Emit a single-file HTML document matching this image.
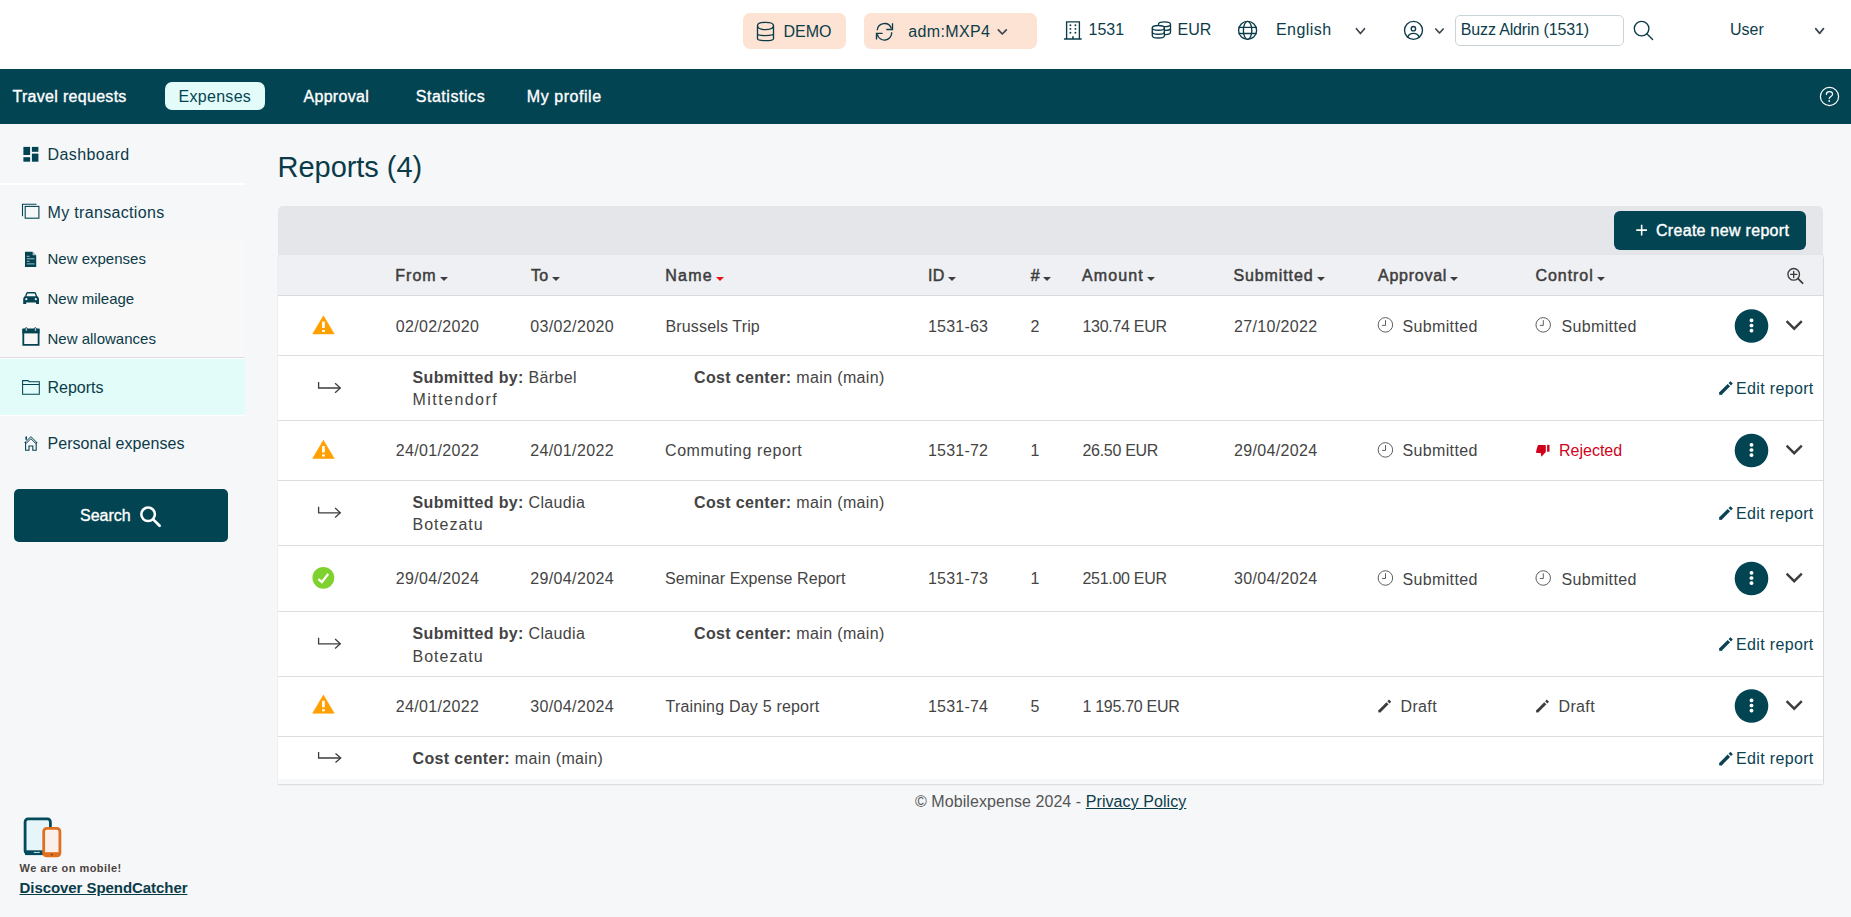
<!DOCTYPE html>
<html><head><meta charset="utf-8">
<style>
*{margin:0;padding:0;box-sizing:border-box}
html,body{width:1851px;height:917px;overflow:hidden}
body{position:relative;background:#f6f7f9;font-family:"Liberation Sans",sans-serif;color:#3d3d3d}
.a{position:absolute}
.t{position:absolute;white-space:nowrap;line-height:1;font-size:16px}
svg{position:absolute;overflow:visible}
#top{left:0;top:0;width:1851px;height:69px;background:#fff}
#nav{left:0;top:69px;width:1851px;height:55px;background:#034453}
.tb{color:#0c3c4a}
.nv{color:#fff;letter-spacing:.3px;-webkit-text-stroke:.35px #fff}
.sb{color:#0b3b48}
.hd{color:#3d3d3d;-webkit-text-stroke:.5px #3d3d3d}
.rw{color:#444;letter-spacing:.35px}
.bd{font-weight:bold}
.cr{display:inline-block;width:0;height:0;border-left:4px solid transparent;border-right:4px solid transparent;border-top:4.3px solid #3d3d3d;margin-left:4.5px;vertical-align:baseline}
.cr.r{border-top-color:#e8101a}
.ln{left:278px;width:1545px;height:1px;background:#dcdddf}
</style></head><body>
<div id="top" class="a"></div>
<!-- top bar pills -->
<div class="a" style="left:743px;top:13px;width:103px;height:36px;background:#fde3d3;border-radius:7px"></div>
<div class="a" style="left:864px;top:13px;width:173px;height:36px;background:#fde3d3;border-radius:7px"></div>
<div class="t tb" style="left:783.5px;top:23.5px">DEMO</div>
<div class="t tb" style="left:908.3px;top:23.5px;letter-spacing:.35px">adm:MXP4</div>
<div class="t tb" style="left:1088.5px;top:21.6px">1531</div>
<div class="t tb" style="left:1177.6px;top:21.5px">EUR</div>
<div class="t tb" style="left:1276px;top:22px;letter-spacing:.45px">English</div>
<div class="a" style="left:1455px;top:15px;width:169px;height:31px;border:1px solid #c9d4d8;border-radius:5px;background:#fff"></div>
<div class="t tb" style="left:1460.8px;top:22px;letter-spacing:-.15px">Buzz Aldrin (1531)</div>
<div class="t tb" style="left:1730px;top:21.5px">User</div>

<div id="nav" class="a"></div>
<div class="a" style="left:165px;top:82px;width:100px;height:28px;background:#e3fcf9;border-radius:7px"></div>
<div class="t nv" style="left:12.5px;top:88.7px">Travel requests</div>
<div class="t" style="left:178.5px;top:88.7px;color:#034453;letter-spacing:.3px">Expenses</div>
<div class="t nv" style="left:303.5px;top:88.7px">Approval</div>
<div class="t nv" style="left:415.7px;top:88.7px;letter-spacing:.55px">Statistics</div>
<div class="t nv" style="left:526.8px;top:88.7px;letter-spacing:.55px">My profile</div>

<!-- sidebar -->
<div class="a" style="left:0;top:183px;width:245px;height:2px;background:#fff"></div>
<div class="a" style="left:0;top:240px;width:245px;height:117px;background:#f8f8f8"></div>
<div class="a" style="left:0;top:357px;width:245px;height:1px;background:#dcdee0"></div>
<div class="a" style="left:0;top:358px;width:245px;height:58px;background:#fff"></div>
<div class="a" style="left:0;top:359px;width:245px;height:56px;background:#e2fdf9"></div>
<div class="t sb" style="left:47.6px;top:147.3px;letter-spacing:.4px">Dashboard</div>
<div class="t sb" style="left:47.5px;top:204.5px;letter-spacing:.33px">My transactions</div>
<div class="t sb" style="left:47.5px;top:251.2px;font-size:15px">New expenses</div>
<div class="t sb" style="left:47.5px;top:290.6px;font-size:15px">New mileage</div>
<div class="t sb" style="left:47.5px;top:330.8px;font-size:15px">New allowances</div>
<div class="t sb" style="left:47.5px;top:380px">Reports</div>
<div class="t sb" style="left:47.5px;top:435.9px;letter-spacing:.05px">Personal expenses</div>
<div class="a" style="left:14px;top:489px;width:214px;height:53px;background:#034453;border-radius:5px"></div>
<div class="t" style="left:80px;top:508px;color:#fff;font-size:16px;-webkit-text-stroke:.35px #fff">Search</div>

<div class="t" style="left:19.5px;top:862.6px;font-size:11px;font-weight:bold;color:#4a4440;letter-spacing:.45px">We are on mobile!</div>
<div class="t" style="left:19.5px;top:879.9px;font-size:15px;font-weight:bold;color:#0b3c49;text-decoration:underline;letter-spacing:-.06px">Discover SpendCatcher</div>

<!-- main -->
<div class="t" style="left:277.6px;top:152.6px;font-size:29px;color:#0b3b48;letter-spacing:-.05px">Reports (4)</div>

<div class="a" style="left:278px;top:206px;width:1545px;height:49px;background:#e5e6e9;border-radius:5px 5px 0 0"></div>
<div class="a" style="left:1614px;top:211px;width:192px;height:39px;background:#034453;border-radius:6px"></div>
<div class="t" style="left:1656px;top:222.5px;color:#fff;letter-spacing:.3px;-webkit-text-stroke:.4px #fff">Create new report</div>
<div class="a" style="left:278px;top:255px;width:1545px;height:529px;background:#f7f8fa;box-shadow:0 1px 1.5px rgba(0,0,0,.13),-.5px 0 1px rgba(0,0,0,.08),.5px 0 1px rgba(0,0,0,.08)"></div>
<div class="a" style="left:278px;top:255px;width:1545px;height:41px;background:#eff0f3"></div>
<div class="a" style="left:278px;top:296px;width:1545px;height:483px;background:#fff"></div>

<div class="a ln" style="top:295px;background:#d9dadd;height:1px"></div>
<div class="a ln" style="top:355px"></div>
<div class="a ln" style="top:420px"></div>
<div class="a ln" style="top:480px"></div>
<div class="a ln" style="top:545px"></div>
<div class="a ln" style="top:611px"></div>
<div class="a ln" style="top:676px"></div>
<div class="a ln" style="top:736px"></div>

<!-- header -->
<div class="t hd" style="left:395.3px;top:267.5px"><span style="letter-spacing:1.0px">From</span><i class="cr" style="margin-left:2.90px"></i></div>
<div class="t hd" style="left:531.0px;top:267.5px"><span style="letter-spacing:0.35px">To</span><i class="cr" style="margin-left:3.55px"></i></div>
<div class="t hd" style="left:665.2px;top:267.5px"><span style="letter-spacing:1.25px">Name</span><i class="cr r" style="margin-left:2.65px"></i></div>
<div class="t hd" style="left:928.0px;top:267.5px"><span style="letter-spacing:0.35px">ID</span><i class="cr" style="margin-left:3.55px"></i></div>
<div class="t hd" style="left:1030.7px;top:267.5px"><span style="letter-spacing:0.35px">#</span><i class="cr" style="margin-left:3.55px"></i></div>
<div class="t hd" style="left:1082.0px;top:267.5px"><span style="letter-spacing:1.13px">Amount</span><i class="cr" style="margin-left:2.77px"></i></div>
<div class="t hd" style="left:1233.4px;top:267.5px"><span style="letter-spacing:0.9px">Submitted</span><i class="cr" style="margin-left:3.00px"></i></div>
<div class="t hd" style="left:1378.0px;top:267.5px"><span style="letter-spacing:0.75px">Approval</span><i class="cr" style="margin-left:3.15px"></i></div>
<div class="t hd" style="left:1535.4px;top:267.5px"><span style="letter-spacing:0.97px">Control</span><i class="cr" style="margin-left:2.93px"></i></div>

<!-- rows -->
<div class="t rw" style="left:395.7px;top:318.5px">02/02/2020</div>
<div class="t rw" style="left:530.3px;top:318.5px">03/02/2020</div>
<div class="t rw" style="left:665.5px;top:318.5px;letter-spacing:.15px">Brussels Trip</div>
<div class="t rw" style="left:928px;top:318.5px;letter-spacing:.2px">1531-63</div>
<div class="t rw" style="left:1030.5px;top:318.5px">2</div>
<div class="t rw" style="left:1082.5px;top:318.5px;letter-spacing:-.3px">130.74 EUR</div>
<div class="t rw" style="left:1234px;top:318.5px">27/10/2022</div>
<div class="t rw" style="left:1402.5px;top:318.5px">Submitted</div>
<div class="t rw" style="left:1561.5px;top:318.5px">Submitted</div>

<div class="t rw" style="left:395.7px;top:442.7px">24/01/2022</div>
<div class="t rw" style="left:530.3px;top:442.7px">24/01/2022</div>
<div class="t rw" style="left:665px;top:442.7px;letter-spacing:.58px">Commuting report</div>
<div class="t rw" style="left:928px;top:442.7px;letter-spacing:.2px">1531-72</div>
<div class="t rw" style="left:1030.5px;top:442.7px">1</div>
<div class="t rw" style="left:1082.5px;top:442.7px;letter-spacing:-.3px">26.50 EUR</div>
<div class="t rw" style="left:1234px;top:442.7px">29/04/2024</div>
<div class="t rw" style="left:1402.5px;top:442.7px">Submitted</div>
<div class="t rw" style="left:1559px;top:442.7px;color:#d0021b;letter-spacing:0">Rejected</div>

<div class="t rw" style="left:395.7px;top:570.9px">29/04/2024</div>
<div class="t rw" style="left:530.3px;top:570.9px">29/04/2024</div>
<div class="t rw" style="left:665px;top:570.9px;letter-spacing:.08px">Seminar Expense Report</div>
<div class="t rw" style="left:928px;top:570.9px;letter-spacing:.2px">1531-73</div>
<div class="t rw" style="left:1030.5px;top:570.9px">1</div>
<div class="t rw" style="left:1082.5px;top:570.9px;letter-spacing:-.3px">251.00 EUR</div>
<div class="t rw" style="left:1234px;top:570.9px">30/04/2024</div>
<div class="t rw" style="left:1402.5px;top:571.5px">Submitted</div>
<div class="t rw" style="left:1561.5px;top:571.5px">Submitted</div>

<div class="t rw" style="left:395.7px;top:698.9px">24/01/2022</div>
<div class="t rw" style="left:530.3px;top:698.9px">30/04/2024</div>
<div class="t rw" style="left:665.5px;top:698.9px;letter-spacing:.2px">Training Day 5 report</div>
<div class="t rw" style="left:928px;top:698.9px;letter-spacing:.2px">1531-74</div>
<div class="t rw" style="left:1030.5px;top:698.9px">5</div>
<div class="t rw" style="left:1082.5px;top:698.9px;letter-spacing:-.3px">1 195.70 EUR</div>
<div class="t rw" style="left:1400.5px;top:699px">Draft</div>
<div class="t rw" style="left:1558.5px;top:699px">Draft</div>

<!-- sub rows -->
<div class="t rw" style="left:412.5px;top:369.5px"><b>Submitted by:</b> Bärbel</div>
<div class="t rw" style="left:412.5px;top:392px;letter-spacing:1.45px">Mittendorf</div>
<div class="t rw" style="left:694px;top:369.5px"><b>Cost center:</b> main (main)</div>
<div class="t rw" style="left:412.5px;top:494.5px"><b>Submitted by:</b> Claudia</div>
<div class="t rw" style="left:412.5px;top:517px;letter-spacing:1px">Botezatu</div>
<div class="t rw" style="left:694px;top:494.5px"><b>Cost center:</b> main (main)</div>
<div class="t rw" style="left:412.5px;top:625.9px"><b>Submitted by:</b> Claudia</div>
<div class="t rw" style="left:412.5px;top:648.6px;letter-spacing:1px">Botezatu</div>
<div class="t rw" style="left:694px;top:625.9px"><b>Cost center:</b> main (main)</div>
<div class="t rw" style="left:412.5px;top:751px"><b>Cost center:</b> main (main)</div>

<div class="t rw" style="left:1736px;top:380.6px;color:#0a4252">Edit report</div>
<div class="t rw" style="left:1736px;top:505.6px;color:#0a4252">Edit report</div>
<div class="t rw" style="left:1736px;top:636.6px;color:#0a4252">Edit report</div>
<div class="t rw" style="left:1736px;top:751px;color:#0a4252">Edit report</div>

<!-- footer -->
<div class="t" style="left:915px;top:794px;color:#555;letter-spacing:.07px">© Mobilexpense 2024 - <span style="color:#0b3c49;text-decoration:underline">Privacy Policy</span></div>


<svg class="a" style="left:0;top:0" width="1851" height="917" viewBox="0 0 1851 917" fill="none" stroke-linecap="round" stroke-linejoin="round">
<g stroke="#0c3c4a" stroke-width="1.35">
<!-- database -->
<path d="M757.5,25.5 C757.5,21.3 773.5,21.3 773.5,25.5 C773.5,31 757.5,31 757.5,25.5 M757.5,25.5 V38.8 C757.5,41.3 773.5,41.3 773.5,38.8 V25.5 M757.5,33.8 C757.5,36.2 773.5,36.2 773.5,33.8"/>
<!-- refresh -->
<path d="M877.2,30.2 A7.3,7.3 0 0 1 891.3,28.2 M892.5,23.2 V29.5 H886.3 M891.7,32.3 A7.3,7.3 0 0 1 877.3,34.4 M876.5,39.5 V33.4 H882.6" stroke-linecap="butt" stroke-linejoin="miter"/>
<!-- building -->
<path d="M1066.6,39 V21.8 H1079.4 V39 M1064.5,39 H1081.2" stroke-linejoin="miter"/>
<path d="M1073,39 V36.3" stroke-width="1.6" stroke-linecap="butt"/>
<!-- coins back -->
<path d="M1158.5,24.3 C1158.5,21 1170.5,21 1170.5,24.3 V32.3 C1170.5,34.8 1164,34.8 1164.4,34.3 M1164.4,26.6 C1168,26.8 1170.5,25.8 1170.5,24.3 M1164.4,30.4 C1168,30.6 1170.5,29.8 1170.5,28.3"/>
<path d="M1152.3,28 C1152.3,24.7 1164.4,24.7 1164.4,28 V35.7 C1164.4,38.7 1152.3,38.7 1152.3,35.7 Z" fill="#fff"/>
<path d="M1152.3,28 C1152.3,31 1164.4,31 1164.4,28 M1152.3,32 C1152.3,35 1164.4,35 1164.4,32"/>
<!-- globe -->
<circle cx="1247.6" cy="30.4" r="9"/>
<path d="M1239,27.4 H1256.2 M1239,33.5 H1256.2"/>
<ellipse cx="1247.6" cy="30.4" rx="4.2" ry="9"/>
<!-- user circle -->
<circle cx="1413.5" cy="30.35" r="9"/>
<circle cx="1413.4" cy="28.7" r="2.2"/>
<path d="M1407.6,37.2 C1408.6,34.8 1410.6,33.4 1413.4,33.4 C1416.2,33.4 1418.3,34.8 1419.3,37.2"/>
<!-- search -->
<circle cx="1641.6" cy="28.6" r="7.3"/>
<path d="M1647.1,34 L1652.6,39.5"/>
</g>
<g fill="#0c3c4a">
<circle cx="1070.4" cy="25.2" r="0.95"/><circle cx="1075.4" cy="25.2" r="0.95"/>
<circle cx="1070.4" cy="28.9" r="0.95"/><circle cx="1075.4" cy="28.9" r="0.95"/>
<circle cx="1070.4" cy="32.8" r="0.95"/><circle cx="1075.4" cy="32.8" r="0.95"/>
</g>
<g stroke="#3d4752" stroke-width="1.7">
<path d="M998.3,29.8 L1002.3,34 L1006.3,29.8"/>
<path d="M1356.4,28.7 L1360.45,33.5 L1364.5,28.7"/>
<path d="M1435.8,29 L1439.5,33 L1443.2,29"/>
<path d="M1815.7,28.6 L1819.6,33.4 L1823.5,28.6"/>
</g>
</svg>

<svg class="a" style="left:0;top:0" width="1851" height="917" viewBox="0 0 1851 917" fill="none">
<!-- help -->
<g stroke="#fff" stroke-width="1.2" stroke-linecap="round">
<circle cx="1829.5" cy="96.5" r="9.1"/>
<path d="M1826.4,94.4 C1826.4,92.6 1827.8,91.7 1829.5,91.7 C1831.3,91.7 1832.6,92.8 1832.6,94.3 C1832.6,96.2 1829.2,96.6 1829.2,98.6"/>
</g>
<rect x="1828.4" y="100.2" width="1.6" height="1.6" fill="#fff"/>
<!-- sidebar icons -->
<g fill="#034453">
<rect x="23.4" y="146.9" width="6.7" height="8.1"/>
<rect x="23.4" y="157.2" width="6.7" height="4.5"/>
<rect x="31.9" y="146.9" width="6.5" height="4.9"/>
<rect x="31.9" y="153.6" width="6.5" height="8.1"/>
</g>
<g stroke="#034453" stroke-width="1.1">
<path d="M22.5,216.2 V204.2 H36.5"/>
<rect x="25.2" y="206.4" width="13.7" height="11.8" fill="#f6f7f9"/>
</g>
<!-- doc -->
<path d="M25,251.7 H32.6 L36.2,255.3 V267 H25 Z" fill="#034453"/>
<path d="M32.6,251.7 V255.3 H36.2 Z" fill="#f6f7f9" opacity=".7"/>
<g stroke="#b9c9cd" stroke-width="0.9"><path d="M26.8,256.3 H29.5 M26.8,258.8 H34.5 M26.8,261.3 H29.5 M26.8,263.9 H34.5"/></g>
<!-- car -->
<path d="M23.2,299.5 C23.2,297.5 24.2,296.5 25,296.3 L26.3,292.8 C26.5,292.2 27,292 27.6,292 H34.6 C35.2,292 35.7,292.2 35.9,292.8 L37.2,296.3 C38,296.5 39,297.5 39,299.5 V303.9 H36 V302.5 H26.2 V303.9 H23.2 Z" fill="#034453"/>
<path d="M26.4,296.2 L27.5,293.4 H34.7 L35.8,296.2 Z" fill="#f6f7f9"/>
<circle cx="26.3" cy="299.2" r="1.1" fill="#f6f7f9"/><circle cx="35.8" cy="299.2" r="1.1" fill="#f6f7f9"/>
<!-- calendar -->
<path d="M23.3,329.4 H38.6 V344.9 H23.3 Z" stroke="#034453" stroke-width="1.8"/>
<rect x="22.4" y="329.1" width="17.1" height="4.3" fill="#034453"/>
<g stroke="#034453" stroke-width="1" fill="#f8f8f8"><rect x="25.2" y="327.7" width="2" height="3.6" rx="1"/><rect x="34.3" y="327.7" width="2" height="3.6" rx="1"/></g>
<!-- folder -->
<path d="M22.6,394.3 V380.6 H28 L29.2,381.7 H39.3 V394.3 Z M22.6,384.4 H39.3" stroke="#034453" stroke-width="1.05" stroke-linejoin="miter"/>
<!-- house -->
<g stroke="#034453" stroke-width="1" stroke-linejoin="miter">
<path d="M24.5,443 L30.9,436.6 L37.3,443 M26,443.6 L30.9,438.7 L35.8,443.6"/>
<path d="M25.6,442 V450.3 H29 V446 H32.8 V450.3 H36.2 V442" stroke-width="1.1"/>
<path d="M26.2,436.5 V439.8" stroke-width="1.6"/>
</g>
<!-- search btn icon -->
<g stroke="#fff" stroke-width="2.5" stroke-linecap="round">
<circle cx="148.1" cy="514.3" r="6.8"/>
<path d="M153.4,519.6 L159.6,525.8" stroke-width="2.7"/>
</g>
<!-- tablet/phone -->
<rect x="25.1" y="818.9" width="25.3" height="34.8" rx="3" fill="#e6f5fa" stroke="#034a5a" stroke-width="2.8"/>
<rect x="25.1" y="850.3" width="25.3" height="4.8" fill="#034a5a"/>
<path d="M33.8,852.4 H39.8" stroke="#cfe4ea" stroke-width="1"/>
<rect x="43.7" y="828.4" width="16.2" height="27.5" rx="3" fill="#fbf0e9" stroke="#e07020" stroke-width="2.8"/>
<rect x="43.7" y="852.2" width="16.2" height="4" fill="#e07020"/>
<circle cx="51.8" cy="854.6" r="0.9" fill="#7a3a10"/>
</svg>
<svg class="a" style="left:0;top:0" width="1851" height="917" viewBox="0 0 1851 917" fill="none">
<path d="M1636.3,230.1 H1647 M1641.65,224.8 V235.4" stroke="#fff" stroke-width="1.6"/>
<g stroke="#3d3d3d" stroke-width="1.35" stroke-linecap="round"><circle cx="1793.7" cy="274.3" r="5.8"/><path d="M1790.6,274.4 H1796.8 M1793.7,271.3 V277.5"/><path d="M1798,278.6 L1802.6,283.2" stroke-width="1.8"/></g>
<path d="M323.4,315.8 L334.2,333.9 H312.7 Z" fill="#ffa000" stroke="#ffa000" stroke-width="0.6" stroke-linejoin="round"/><rect x="322.1" y="321.5" width="2.7" height="6.5" fill="#fff"/><rect x="322.1" y="329.9" width="2.7" height="2.1" fill="#fff"/>
<path d="M323.4,440.3 L334.2,458.4 H312.7 Z" fill="#ffa000" stroke="#ffa000" stroke-width="0.6" stroke-linejoin="round"/><rect x="322.1" y="446.0" width="2.7" height="6.5" fill="#fff"/><rect x="322.1" y="454.4" width="2.7" height="2.1" fill="#fff"/>
<path d="M323.4,695.0999999999999 L334.2,713.1999999999999 H312.7 Z" fill="#ffa000" stroke="#ffa000" stroke-width="0.6" stroke-linejoin="round"/><rect x="322.1" y="700.8" width="2.7" height="6.5" fill="#fff"/><rect x="322.1" y="709.1999999999999" width="2.7" height="2.1" fill="#fff"/>
<circle cx="323.35" cy="577.8" r="10.9" fill="#7ed12f"/><path d="M318.4,579.2 L321.9,582.1 L328.2,573.9" stroke="#fff" stroke-width="2.3" stroke-linejoin="miter"/>
<g stroke="#3d3d3d" stroke-width="1.3" stroke-linecap="butt"><path d="M318.6,382 V388 H340.2"/><path d="M335.1,383.3 L340.3,388 L335.1,392.7" stroke-linejoin="miter"/></g>
<g stroke="#3d3d3d" stroke-width="1.3" stroke-linecap="butt"><path d="M318.6,506.79999999999995 V512.8 H340.2"/><path d="M335.1,508.09999999999997 L340.3,512.8 L335.1,517.5" stroke-linejoin="miter"/></g>
<g stroke="#3d3d3d" stroke-width="1.3" stroke-linecap="butt"><path d="M318.6,637.8 V643.8 H340.2"/><path d="M335.1,639.0999999999999 L340.3,643.8 L335.1,648.5" stroke-linejoin="miter"/></g>
<g stroke="#3d3d3d" stroke-width="1.3" stroke-linecap="butt"><path d="M318.6,752 V758 H340.9"/><path d="M335.5,753.4 L340.7,758 L335.5,762.6000000000001" stroke-linejoin="miter"/></g>
<circle cx="1751.5" cy="326" r="16.8" fill="#034453"/>
<rect x="1749.6" y="318.59999999999997" width="3.8" height="3.6" rx="1.6" fill="#fff"/>
<rect x="1749.6" y="323.7" width="3.8" height="3.6" rx="1.6" fill="#fff"/>
<rect x="1749.6" y="328.8" width="3.8" height="3.6" rx="1.6" fill="#fff"/>
<path d="M1786.6,321.2 L1794.2,328.7 L1801.8,321.2" stroke="#3d3d3d" stroke-width="2.4" stroke-linecap="butt"/>
<circle cx="1751.5" cy="450.5" r="16.8" fill="#034453"/>
<rect x="1749.6" y="443.09999999999997" width="3.8" height="3.6" rx="1.6" fill="#fff"/>
<rect x="1749.6" y="448.2" width="3.8" height="3.6" rx="1.6" fill="#fff"/>
<rect x="1749.6" y="453.3" width="3.8" height="3.6" rx="1.6" fill="#fff"/>
<path d="M1786.6,445.7 L1794.2,453.2 L1801.8,445.7" stroke="#3d3d3d" stroke-width="2.4" stroke-linecap="butt"/>
<circle cx="1751.5" cy="578.5" r="16.8" fill="#034453"/>
<rect x="1749.6" y="571.1" width="3.8" height="3.6" rx="1.6" fill="#fff"/>
<rect x="1749.6" y="576.2" width="3.8" height="3.6" rx="1.6" fill="#fff"/>
<rect x="1749.6" y="581.3000000000001" width="3.8" height="3.6" rx="1.6" fill="#fff"/>
<path d="M1786.6,573.7 L1794.2,581.2 L1801.8,573.7" stroke="#3d3d3d" stroke-width="2.4" stroke-linecap="butt"/>
<circle cx="1751.5" cy="706" r="16.8" fill="#034453"/>
<rect x="1749.6" y="698.6" width="3.8" height="3.6" rx="1.6" fill="#fff"/>
<rect x="1749.6" y="703.7" width="3.8" height="3.6" rx="1.6" fill="#fff"/>
<rect x="1749.6" y="708.8000000000001" width="3.8" height="3.6" rx="1.6" fill="#fff"/>
<path d="M1786.6,701.2 L1794.2,708.7 L1801.8,701.2" stroke="#3d3d3d" stroke-width="2.4" stroke-linecap="butt"/>
<g stroke="#555" stroke-width="0.95"><circle cx="1385.4" cy="324.85" r="7.25"/><path d="M1385.5,320.15000000000003 V325.35 H1382.1000000000001"/></g>
<g stroke="#555" stroke-width="0.95"><circle cx="1543.2" cy="324.85" r="7.25"/><path d="M1543.3,320.15000000000003 V325.35 H1539.9"/></g>
<g stroke="#555" stroke-width="0.95"><circle cx="1385.4" cy="449.9" r="7.25"/><path d="M1385.5,445.2 V450.4 H1382.1000000000001"/></g>
<g stroke="#555" stroke-width="0.95"><circle cx="1385.4" cy="578" r="7.25"/><path d="M1385.5,573.3 V578.5 H1382.1000000000001"/></g>
<g stroke="#555" stroke-width="0.95"><circle cx="1543.2" cy="578" r="7.25"/><path d="M1543.3,573.3 V578.5 H1539.9"/></g>
<path d="M1538,444.9 H1545.2 Q1545.8,444.9 1545.8,445.6 V452.1 L1541.4,456.8 L1540.7,453.1 H1536.7 Q1536,453.1 1536.1,452.3 L1536.4,450 Z" fill="#d0021b"/><rect x="1547.1" y="444.9" width="2.4" height="6.8" fill="#d0021b"/>
<path d="M1379.10,711.70 L1387.51,703.29" stroke="#3d3d3d" stroke-width="3.0" stroke-linecap="butt"/><path d="M1388.41,702.39 L1390.13,700.67" stroke="#3d3d3d" stroke-width="3.0" stroke-linecap="butt"/><path d="M1378.2,712.6 L1378.7,710.3000000000001 L1380.5,712.1 Z" fill="#3d3d3d"/>
<path d="M1536.90,711.70 L1545.31,703.29" stroke="#3d3d3d" stroke-width="3.0" stroke-linecap="butt"/><path d="M1546.21,702.39 L1547.93,700.67" stroke="#3d3d3d" stroke-width="3.0" stroke-linecap="butt"/><path d="M1536.0,712.6 L1536.5,710.3000000000001 L1538.3,712.1 Z" fill="#3d3d3d"/>
<path d="M1720.00,394.00 L1728.89,385.11" stroke="#0a4252" stroke-width="3.4" stroke-linecap="butt"/><path d="M1729.79,384.21 L1731.65,382.35" stroke="#0a4252" stroke-width="3.4" stroke-linecap="butt"/><path d="M1719.1,394.9 L1719.6,392.59999999999997 L1721.3999999999999,394.4 Z" fill="#0a4252"/>
<path d="M1720.00,519.00 L1728.89,510.11" stroke="#0a4252" stroke-width="3.4" stroke-linecap="butt"/><path d="M1729.79,509.21 L1731.65,507.35" stroke="#0a4252" stroke-width="3.4" stroke-linecap="butt"/><path d="M1719.1,519.9 L1719.6,517.6 L1721.3999999999999,519.4 Z" fill="#0a4252"/>
<path d="M1720.00,650.00 L1728.89,641.11" stroke="#0a4252" stroke-width="3.4" stroke-linecap="butt"/><path d="M1729.79,640.21 L1731.65,638.35" stroke="#0a4252" stroke-width="3.4" stroke-linecap="butt"/><path d="M1719.1,650.9 L1719.6,648.6 L1721.3999999999999,650.4 Z" fill="#0a4252"/>
<path d="M1720.00,764.70 L1728.89,755.81" stroke="#0a4252" stroke-width="3.4" stroke-linecap="butt"/><path d="M1729.79,754.91 L1731.65,753.05" stroke="#0a4252" stroke-width="3.4" stroke-linecap="butt"/><path d="M1719.1,765.6 L1719.6,763.3000000000001 L1721.3999999999999,765.1 Z" fill="#0a4252"/>
</svg>
</body></html>
